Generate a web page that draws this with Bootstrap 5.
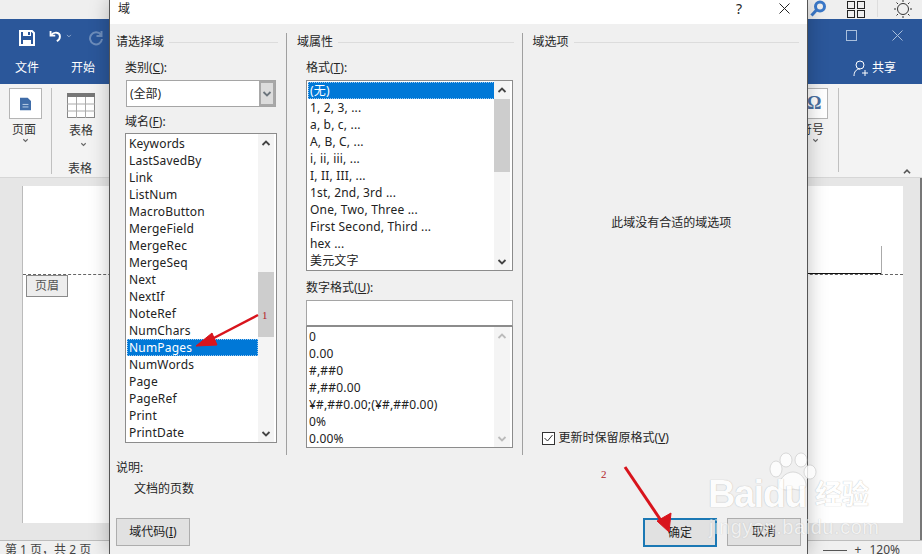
<!DOCTYPE html>
<html lang="zh"><head><meta charset="utf-8"><title>域</title>
<link href="https://cdn.jsdelivr.net/npm/bootstrap@5.3.0/dist/css/bootstrap.min.css" rel="stylesheet">
<style>
html,body{margin:0;height:554px;overflow:hidden;background:#e6e6e6}
body{font:12px/16px "Noto Sans","Noto Sans CJK SC",sans-serif;color:#262626}
.desk{position:relative;width:922px;height:554px;overflow:hidden}
.wtop{height:19px;background:#efefef;padding-left:810px}
.tsearch{margin-right:20px}
.tsep{width:1px;height:17px;background:#ddd;margin:0 15px 0 12px}
.wblue{height:65px;background:#2b579a;color:#fff}
.wbl1{height:36px;padding-left:19px;gap:14px}
.wbl1 .spacer{width:714px}
.ticon{margin-top:11px;flex:none}
.wclose{margin-left:21px}
.wbl2{height:26px;padding-left:15px;gap:32px;font-size:12px}
.wshare{margin-left:726px;gap:3px}
.wrib{height:94px;background:#f3f3f3;border-bottom:1px solid #d6d6d6;color:#333}
.rbox{width:33px;height:31px;background:#fff;border:1px solid #b5b5b5}
.rcol1{width:51px;padding:4px 0 0 9px;font-size:12px}
.rcol1 .rlbl{margin:3px 0 0 3px}
.rchev{width:7px;height:5px;display:block;color:#666}
.rch1{margin-left:13px}
.rch2{margin:3px 0 0 13px}
.rch3{margin-left:5px}
.rsep{width:1px;height:86px;background:#c0c0c0;margin-top:4px}
.rsep2{height:84px}
.rcol2{width:62px;padding:9px 0 0 15px}
.rl21{margin:5px 0 0 2px}
.rl22{margin:14px 0 0 1px}
.rcol3{margin-left:693px;width:31px;padding-top:4px}
.rbox2{width:21px;height:31px;background:#fff;border:1px solid #b5b5b5;border-left:0;color:#4a6f9f;font:bold 18px/28px "Liberation Serif",serif;text-align:right;padding-right:8px}
.rlbl3{margin:3px 0 0 -7px;width:24px;white-space:nowrap}
.rcollapse{margin:84px 0 0 62px;color:#555}
.wdoc{height:362px;background:#e6e6e6;padding:8px 17px 0 22px;border-right:2px solid #777}
.wpage{height:337px;background:#fff;border-left:1px solid #bbb;position:relative}
.hdrline{position:absolute;left:0;right:0;top:88px;border-top:1px dashed #666}
.hdrtag{position:absolute;left:3px;top:89px;width:42px;height:22px;background:#ededed;border:1px solid #8a8a8a;text-align:center;line-height:19px;color:#555}
.hdrblack{position:absolute;left:785px;width:74px;top:87px;border-top:1px solid #111}
.hdrtick{position:absolute;left:858px;top:60px;height:28px;width:1px;background:#aaa}
.wstat{height:19px;background:#f0f0f0;border-top:1px solid #bdbdbd;padding:1px 0 0 5px;color:#444}
.wzoom{margin-left:auto;margin-right:22px;gap:8px}
.zline{width:24px;height:1px;background:#555;margin-top:8px}
.dlg{position:absolute;left:109px;top:0;width:699px;height:554px;background:#f0f0f0;border-left:1px solid #555;border-right:1px solid #555;box-shadow:0 0 18px rgba(0,0,0,.25)}
.dhead{height:24px;background:#fff;padding:0 0 0 8px;line-height:17px}
.dhelp{margin-left:auto;font-size:14px;margin-right:37px;line-height:17px}
.dx{margin-right:17px;margin-top:3px}
.dcols{height:431px;padding:9px 0 0 6px}
.dc1{width:171px;border-right:1px solid #a0a0a0;height:422px}
.dc2{width:236px;border-right:1px solid #a0a0a0;height:422px;padding-left:10px}
.dc3{width:285px;height:422px;padding-left:10px;position:relative}
.gtitle{gap:5px;align-items:center;height:16px;margin:1px 8px 0 0}
.gtitle i{flex:1;height:1px;background:#dcdcdc}
.flabel{margin:10px 0 0 9px;height:16px}
.fl2{margin-top:7px}
.fl3{margin-top:9px}
.sel{margin:4px 11px 0 10px;width:150px;height:27px;background:#fff;border:1px solid #a5a5a5;padding:5px 0 0 3px}
.selbtn{width:16px;height:25px;background:#dcdcdc;border:2px solid #a8a8a8;margin:-5px 0 0 auto;align-items:center;justify-content:center}
.lbox{background:#fff;border:1px solid #8c8c8c;position:relative;overflow:hidden}
.lb1{width:152px;height:310px;margin:3px 0 0 9px}
.lb2{width:207px;height:191px;margin:4px 0 0 9px}
.lb3{width:207px;height:122px;margin:0 0 0 9px}
.lrow{height:17px;line-height:17px;padding-left:3px;white-space:nowrap;color:#222;letter-spacing:.18px}
.lb1 .lrow{margin:0 0 0 1px;padding-left:2px}
.lrow.on{background:#0078d7;color:#fff;outline:1px dotted #9cc8ee;outline-offset:-1px}
.lb1 .lrow.on{width:131px}
.lb2 .lrow.on{width:187px;margin-left:1px;padding-left:2px}
.lb3 .lrow{padding-left:2px}
.lrows1,.lrows2,.lrows3{padding-top:1px}
.sb{position:absolute;right:2px;top:0;bottom:0;width:16px;background:#f4f4f4;color:#444}
.sb.off{color:#bbb}
.sbup{position:absolute;left:3px;top:5px}
.sbdn{position:absolute;left:3px;bottom:4px}
.th1{position:absolute;left:0;right:0;top:138px;height:65px;background:#cdcdcd}
.th2{position:absolute;left:0;right:0;top:18px;height:73px;background:#cdcdcd}
.fin{width:207px;height:26px;margin:4px 0 0 9px;background:#fff;border:1px solid #a5a5a5;border-bottom-color:#8c8c8c}
.nomsg{margin:165px 0 0 3px;text-align:center;height:16px}
.chk{position:absolute;left:19px;top:397px;gap:4px;align-items:center}
.chkb{width:13px;height:13px;border:1px solid #333;background:#fff;display:flex;align-items:center;justify-content:center}
.dnote{padding-left:6px;margin-top:5px}
.dnote2{margin:5px 0 0 24px;height:16px}
.dbtns{padding:0 6px;margin-top:21px;align-items:flex-start}
.wbtn{width:74px;height:28px;background:#e1e1e1;border:1px solid #adadad;text-align:center;line-height:26px;color:#222}
.wbtn.prim{border:2px solid #1b78b4;height:29px;line-height:25px;margin-left:auto}
.wbtn.sec{margin-left:10px}
.u{text-decoration:underline;text-underline-offset:1px}
.wm{position:absolute;left:0;top:0;pointer-events:none;color:#fff;text-shadow:0 0 1px #999}
.wmbai{position:absolute;left:708px;top:474px;font:bold 38px/40px "Liberation Sans",sans-serif;letter-spacing:-1.5px;opacity:.8}
.wmjy{position:absolute;left:815px;top:477px;font:bold 27px/32px "Noto Sans CJK SC",sans-serif;white-space:nowrap;opacity:.8}
.wmurl{position:absolute;left:709px;top:515px;font:20px/24px "Liberation Sans",sans-serif;letter-spacing:.55px;white-space:nowrap;opacity:.5}
.wmpaw{position:absolute;left:765px;top:452px;opacity:.8}
.ann{position:absolute;left:0;top:0}
.num{position:absolute;font:11px/12px "Liberation Serif",serif;color:#b3232a}
.n1{left:262px;top:309px}
.n2{left:601px;top:468px}
</style></head>
<body>
<svg width="0" height="0" class="position-absolute">
<symbol id="up" viewBox="0 0 10 8"><path d="M1.500 6 5 2.500 8.500 6" fill="none" stroke="currentColor" stroke-width="1.800"/></symbol>
<symbol id="dn" viewBox="0 0 10 8"><path d="M1.500 2 5 5.500 8.500 2" fill="none" stroke="currentColor" stroke-width="1.800"/></symbol>
</svg>
<div class="desk">
  <div class="wtop d-flex">
    <svg class="tsearch" width="17" height="17" viewBox="0 0 17 17"><circle cx="10" cy="6.500" r="4.500" fill="none" stroke="#3a78c9" stroke-width="3"/><path d="M6.500 10 1.500 15.500" stroke="#3a78c9" stroke-width="3"/></svg>
    <svg width="18" height="18" viewBox="0 0 18 18" fill="none" stroke="#222"><rect x=".5" y="1.500" width="7" height="7"/><rect x="10.500" y="1.500" width="7" height="7"/><rect x=".5" y="10.500" width="7" height="7"/><rect x="10.500" y="10.500" width="7" height="7"/></svg>
    <div class="tsep"></div>
    <svg width="20" height="18" viewBox="0 0 20 18" fill="none" stroke="#333"><circle cx="10" cy="9" r="5.500"/><path d="M10 0v2M10 16v2M1 9h2M17 9h2M3.500 2.500 5 4M15 14l1.500 1.500M3.500 15.500 5 14M15 4l1.500-1.500"/></svg>
  </div>
  <div class="wblue">
    <div class="wbl1 d-flex align-items-start">
      <svg class="ticon" width="16" height="16" viewBox="0 0 16 16"><path d="M1 1h12l2 2v12H1z" fill="none" stroke="#fff" stroke-width="2"/><path d="M4 1h8v5H4zM4 10h8v5H4z" fill="#fff"/><path d="M9 2h2v3H9z" fill="#2b579a"/></svg>
      <svg class="ticon" width="25" height="16" viewBox="0 0 32 20" fill="none" stroke="#fff" stroke-width="2.400"><path d="M3 6c3-4 11-4 11 2 0 3-2 5-4 6"/><path d="M2 1v6h6"/><path d="M23 6l2.500 2.500L28 6" stroke-width="1" opacity=".6"/></svg>
      <svg class="ticon" width="16" height="16" viewBox="0 0 16 16" fill="none" stroke="#6d8dbb" stroke-width="2"><path d="M13 5A6 6 0 1 0 14 9M13.500 1v5h-5"/></svg>
      <div class="spacer"></div>
      <svg class="ticon" width="11" height="11" viewBox="0 0 11 11" fill="none" stroke="#a9bfdc"><rect x=".5" y=".5" width="10" height="10"/></svg>
      <svg class="ticon wclose" width="11" height="11" viewBox="0 0 11 11" fill="none" stroke="#a9bfdc"><path d="M.5.5l10 10M10.500.5l-10 10"/></svg>
    </div>
    <div class="wbl2 d-flex align-items-center">
      <span>文件</span><span>开始</span>
      <span class="wshare d-flex align-items-center"><svg width="16" height="16" viewBox="0 0 16 16" fill="none" stroke="#fff"><circle cx="7" cy="5" r="4"/><path d="M1 16c0-4 2-7 6-7M9 13h6M12 10v6"/></svg>共享</span>
    </div>
  </div>
  <div class="wrib d-flex">
    <div class="rcol1"><div class="rbox d-flex align-items-center justify-content-center"><svg width="11" height="14" viewBox="0 0 13 15"><path d="M0 0h9l4 4v11H0z" fill="#3f6ca8"/><path d="M3 8h7M3 11h7" stroke="#cfe0f2"/></svg></div><div class="rlbl">页面</div><svg class="rchev rch1"><use href="#dn"/></svg></div>
    <div class="rsep"></div>
    <div class="rcol2">
      <svg width="28" height="25" viewBox="0 0 28 25" class="d-block"><rect x=".5" y=".5" width="27" height="24" fill="#fff" stroke="#888"/><rect width="28" height="4" fill="#777"/><path d="M0 11h28M0 18h28M9.500 4v21M18.500 4v21" stroke="#aaa"/></svg>
      <div class="rl21">表格</div><svg class="rchev rch2"><use href="#dn"/></svg>
      <div class="rl22">表格</div>
    </div>
    <div class="rcol3"><div class="rbox2">Ω</div><div class="rlbl3">符号</div><svg class="rchev rch3"><use href="#dn"/></svg></div>
    <div class="rsep rsep2"></div>
    <svg class="rcollapse" width="12" height="7"><use href="#up"/></svg>
  </div>
  <div class="wdoc"><div class="wpage"><div class="hdrline"></div><div class="hdrblack"></div><div class="hdrtick"></div><div class="hdrtag">页眉</div></div></div>
  <div class="wstat d-flex"><span>第 1 页，共 2 页</span><span class="wzoom d-flex"><span class="zline"></span><span>+</span><span>120%</span></span></div>

  <div class="dlg" role="dialog">
    <div class="dhead d-flex"><span>域</span><span class="dhelp">?</span><svg class="dx" width="11" height="11" viewBox="0 0 11 11" fill="none" stroke="#222"><path d="M.5.5l10 10M10.500.5l-10 10"/></svg></div>
    <div class="dcols d-flex">
      <div class="dc1">
        <div class="gtitle d-flex"><span>请选择域</span><i></i></div>
        <div class="flabel">类别(<span class="u">C</span>):</div>
        <div class="sel d-flex"><span>(全部)</span><span class="selbtn d-flex"><svg width="10" height="8" class="text-secondary"><use href="#dn"/></svg></span></div>
        <div class="flabel fl2">域名(<span class="u">F</span>):</div>
        <div class="lbox lb1"><div class="lrows1">
          <div class="lrow">Keywords</div><div class="lrow">LastSavedBy</div><div class="lrow">Link</div><div class="lrow">ListNum</div><div class="lrow">MacroButton</div><div class="lrow">MergeField</div><div class="lrow">MergeRec</div><div class="lrow">MergeSeq</div><div class="lrow">Next</div><div class="lrow">NextIf</div><div class="lrow">NoteRef</div><div class="lrow">NumChars</div><div class="lrow on">NumPages</div><div class="lrow">NumWords</div><div class="lrow">Page</div><div class="lrow">PageRef</div><div class="lrow">Print</div><div class="lrow">PrintDate</div></div>
          <div class="sb"><svg class="sbup" width="10" height="8"><use href="#up"/></svg><div class="th1"></div><svg class="sbdn" width="10" height="8"><use href="#dn"/></svg></div>
        </div>
      </div>
      <div class="dc2">
        <div class="gtitle d-flex"><span>域属性</span><i></i></div>
        <div class="flabel">格式(<span class="u">T</span>):</div>
        <div class="lbox lb2"><div class="lrows2">
          <div class="lrow on">(无)</div><div class="lrow">1, 2, 3, ...</div><div class="lrow">a, b, c, ...</div><div class="lrow">A, B, C, ...</div><div class="lrow">i, ii, iii, ...</div><div class="lrow">I, II, III, ...</div><div class="lrow">1st, 2nd, 3rd ...</div><div class="lrow">One, Two, Three ...</div><div class="lrow">First Second, Third ...</div><div class="lrow">hex ...</div><div class="lrow">美元文字</div></div>
          <div class="sb"><svg class="sbup" width="10" height="8"><use href="#up"/></svg><div class="th2"></div><svg class="sbdn" width="10" height="8"><use href="#dn"/></svg></div>
        </div>
        <div class="flabel fl3">数字格式(<span class="u">U</span>):</div>
        <div class="fin"></div>
        <div class="lbox lb3"><div class="lrows3">
          <div class="lrow">0</div><div class="lrow">0.00</div><div class="lrow">#,##0</div><div class="lrow">#,##0.00</div><div class="lrow">¥#,##0.00;(¥#,##0.00)</div><div class="lrow">0%</div><div class="lrow">0.00%</div></div>
          <div class="sb off"><svg class="sbup" width="10" height="8"><use href="#up"/></svg><svg class="sbdn" width="10" height="8"><use href="#dn"/></svg></div>
        </div>
      </div>
      <div class="dc3">
        <div class="gtitle d-flex"><span>域选项</span><i></i></div>
        <div class="nomsg">此域没有合适的域选项</div>
        <div class="chk d-flex"><span class="chkb"><svg width="9" height="8" viewBox="0 0 9 8" fill="none" stroke="#333"><path d="M.5 4 3.500 7 8.500 1"/></svg></span><span>更新时保留原格式(<span class="u">V</span>)</span></div>
      </div>
    </div>
    <div class="dnote">说明:</div>
    <div class="dnote2">文档的页数</div>
    <div class="dbtns d-flex"><div class="wbtn">域代码(<span class="u">I</span>)</div><div class="wbtn prim">确定</div><div class="wbtn sec">取消</div></div>
  </div>

  <div class="wm">
    <svg class="wmpaw" width="52" height="42" viewBox="0 0 52 42" fill="#fff" stroke="#bbb" stroke-width=".6"><ellipse cx="11" cy="17" rx="6" ry="8"/><ellipse cx="21" cy="8" rx="6" ry="7"/><ellipse cx="36" cy="8" rx="6" ry="7"/><ellipse cx="45" cy="20" rx="6" ry="7"/><path d="M28 20c8 0 13 8 13 13 0 5-6 6-13 4-7 2-14 1-14-4 0-5 6-13 14-13z"/></svg>
    <div class="wmbai">Baidu</div>
    <div class="wmjy">经验</div>
    <div class="wmurl">jingyan.baidu.com</div>
  </div>
  <svg class="ann" width="922" height="554" viewBox="0 0 922 554">
    <path d="M258 315 210 340" stroke="#d8141c" stroke-width="2.500"/><path d="M196 346 212 333 217 345z" fill="#d8141c" stroke="#d8141c"/>
    <path d="M625 467 662 522" stroke="#d8141c" stroke-width="3"/><path d="M669 532 657 521 671 513z" fill="#d8141c" stroke="#d8141c"/>
  </svg>
  <span class="num n1">1</span><span class="num n2">2</span>
</div>
</body></html>
